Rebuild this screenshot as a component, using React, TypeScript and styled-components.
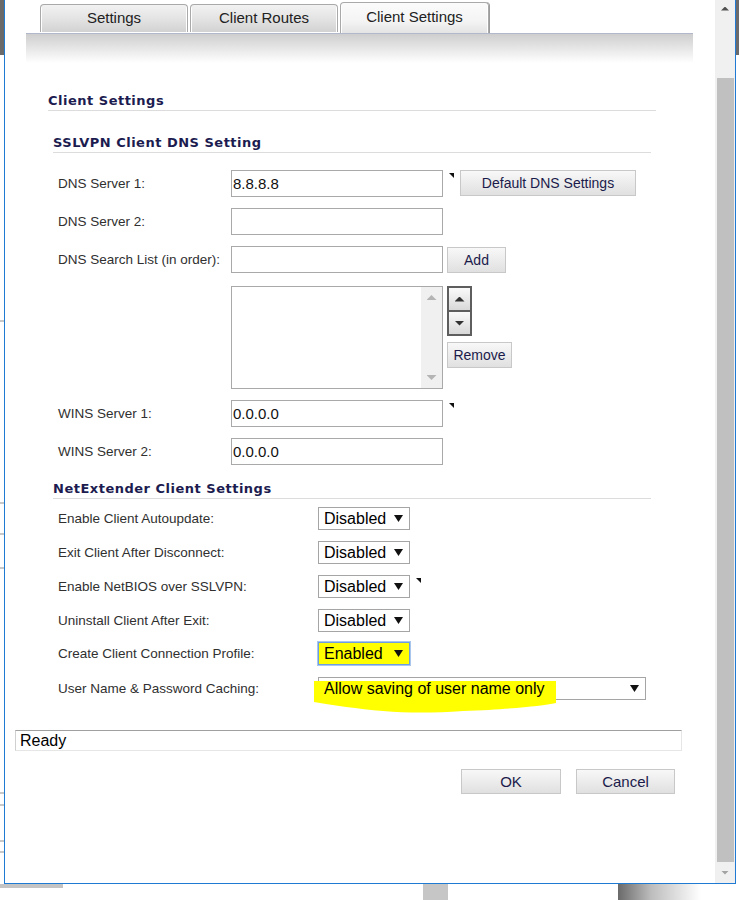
import React from "react";
import styled, { createGlobalStyle } from "styled-components";

const GlobalStyle = createGlobalStyle`
    html, body { margin: 0; padding: 0; background: #fff; }
    body { font-family: "Liberation Sans", Arial, sans-serif; }
    * { box-sizing: border-box; }
`;

const Screen = styled.div`
    width: 739px;
    height: 900px;
    display: flex;
    flex-direction: column;
    overflow: hidden;
    background: #fff;
`;

const Middle = styled.div`
    display: flex;
    height: 884px;
`;

const LeftEdge = styled.div`
    width: 4px;
    background:
        linear-gradient(#6a6a6a, #6a6a6a) 0 0 / 4px 55px no-repeat,
        linear-gradient(#c8c8c8, #c8c8c8) 0 320px / 4px 2px no-repeat,
        linear-gradient(#c8c8c8, #c8c8c8) 0 502px / 4px 2px no-repeat,
        linear-gradient(#c8c8c8, #c8c8c8) 0 533px / 4px 2px no-repeat,
        linear-gradient(#c8c8c8, #c8c8c8) 0 567px / 4px 2px no-repeat,
        linear-gradient(#c8c8c8, #c8c8c8) 0 792px / 4px 2px no-repeat,
        linear-gradient(#c8c8c8, #c8c8c8) 0 804px / 4px 2px no-repeat,
        linear-gradient(#c8c8c8, #c8c8c8) 0 840px / 4px 2px no-repeat,
        linear-gradient(#c8c8c8, #c8c8c8) 0 851px / 4px 2px no-repeat,
        #fff;
`;

const RightEdge = styled.div`
    width: 3px;
    background: linear-gradient(#6a6a6a 0 55px, #fff 55px);
`;

const Dialog = styled.div`
    width: 732px;
    border: 1px solid #1e7ad2;
    border-top: none;
    display: flex;
    background: #fff;
`;

const Content = styled.div`
    width: 710px;
    display: flex;
    flex-direction: column;
`;

/* ---------- tabs ---------- */

const TabStrip = styled.div`
    display: flex;
    align-items: flex-end;
    gap: 2px;
    height: 33px;
    padding-left: 35px;
`;

const Tab = styled.div<{ $active?: boolean }>`
    width: ${p => (p.$active ? 149 : 148)}px;
    height: ${p => (p.$active ? 31 : 28)}px;
    margin-bottom: ${p => (p.$active ? 0 : 1)}px;
    padding-bottom: ${p => (p.$active ? 3 : 3)}px;
    border: 1px solid #a9a9a9;
    border-bottom: none;
    border-radius: 4px 4px 0 0;
    background: ${p =>
        p.$active
            ? "linear-gradient(#fbfbfb, #f4f4f4 60%, #e4e4e4)"
            : "linear-gradient(#f2f2f2, #e2e2e2 55%, #d2d2d2)"};
    box-shadow: inset 5px 0 0 -4px #fff, inset -5px 0 0 -4px #fff,
        ${p => (p.$active ? "1px 0 0 #9c9c9c" : "inset 6px 0 0 -5px #c4c4c4")};
    display: flex;
    align-items: center;
    justify-content: center;
    font-size: 15px;
    color: #222;
`;

const Band = styled.div`
    margin: 0 22px 0 21px;
    height: 30px;
    border-top: 1px solid #b3b7cc;
    background: linear-gradient(#cecece, #e9e9e9 55%, #fff);
`;

/* ---------- sections ---------- */

const PageTitle = styled.div`
    margin: 30px 0 0 43px;
    width: 608px;
    padding-bottom: 1px;
    border-bottom: 1px solid #dcdcdc;
    font-family: "DejaVu Sans", Verdana, sans-serif;
    font-weight: bold;
    font-size: 13px;
    letter-spacing: 0.5px;
    line-height: 16px;
    color: #1c1c50;
`;

const Section = styled.div<{ $top: number }>`
    margin: ${p => p.$top}px 0 0 48px;
    width: 598px;
`;

const SectionTitle = styled.div`
    padding-bottom: 1px;
    border-bottom: 1px solid #dcdcdc;
    font-family: "DejaVu Sans", Verdana, sans-serif;
    font-weight: bold;
    font-size: 13px;
    letter-spacing: 0.5px;
    line-height: 16px;
    color: #1c1c50;
`;

const Rows = styled.div<{ $top: number }>`
    display: flex;
    flex-direction: column;
    gap: 11px;
    margin-top: ${p => p.$top}px;
    padding-left: 5px;
`;

const Row = styled.div<{ $top?: number }>`
    display: flex;
    align-items: flex-start;
    margin-top: ${p => p.$top ?? 0}px;
`;

const Label = styled.div<{ $width: number; $height: number }>`
    width: ${p => p.$width}px;
    line-height: ${p => p.$height}px;
    font-size: 13.5px;
    color: #303030;
    white-space: nowrap;
`;

const TextBox = styled.div`
    width: 212px;
    height: 27px;
    border: 1px solid #a9a9a9;
    padding-left: 1px;
    font-size: 15px;
    line-height: 25px;
    color: #111;
`;

const Marker = styled.div`
    width: 5px;
    height: 5px;
    margin: 3px 0 0 6px;
    background: #111;
    clip-path: polygon(0 0, 100% 0, 100% 100%);
`;

const Button = styled.div<{ $width: number; $left?: number; $top?: number }>`
    width: ${p => p.$width}px;
    height: 26px;
    margin-left: ${p => p.$left ?? 0}px;
    margin-top: ${p => p.$top ?? 0}px;
    border: 1px solid #c8c8c8;
    background: linear-gradient(#f8f8f8, #ececec 50%, #e0e0e0);
    display: flex;
    align-items: center;
    justify-content: center;
    font-size: 14px;
    color: #1b1b4b;
`;

const ListBox = styled.div`
    width: 212px;
    height: 103px;
    border: 1px solid #a9a9a9;
    display: flex;
    justify-content: flex-end;
`;

const ListScroll = styled.div`
    width: 21px;
    background: #f0f0f0;
    display: flex;
    flex-direction: column;
    justify-content: space-between;
    align-items: center;
    padding: 8px 0 8px;
`;

const Arrow = styled.div<{ $down?: boolean; $size: number; $color: string }>`
    width: ${p => p.$size * 2}px;
    height: ${p => p.$size}px;
    background: ${p => p.$color};
    clip-path: ${p =>
        p.$down ? "polygon(0 0, 100% 0, 50% 100%)" : "polygon(50% 0, 100% 100%, 0 100%)"};
`;

const SideColumn = styled.div`
    display: flex;
    flex-direction: column;
    align-items: flex-start;
    margin-left: 4px;
`;

const MoveGroup = styled.div`
    width: 25px;
    border: 2px solid #5e5e5e;
    display: flex;
    flex-direction: column;
    background: #5e5e5e;
    gap: 2px;
`;

const MoveButton = styled.div`
    height: 22px;
    background: linear-gradient(#fafafa, #e6e6e6 60%, #d8d8d8);
    display: flex;
    align-items: center;
    justify-content: center;
`;

const Select = styled.div<{ $width: number; $highlight?: boolean }>`
    position: relative;
    width: ${p => p.$width}px;
    height: 23px;
    border: 1px solid ${p => (p.$highlight ? "#6f9ee0" : "#a5a5a5")};
    background: ${p => (p.$highlight ? "#ffff00" : "#fff")};
    box-shadow: ${p => (p.$highlight ? "0 0 0 1px #a9c6ee" : "none")};
    display: flex;
    align-items: center;
    justify-content: space-between;
    padding: 0 6px 0 5px;
    font-size: 16px;
    color: #000;
`;

const SelectText = styled.span`
    position: relative;
    z-index: 1;
    line-height: 21px;
`;

const Caret = styled.span`
    position: relative;
    z-index: 1;
    width: 9px;
    height: 7px;
    background: #111;
    clip-path: polygon(0 0, 100% 0, 50% 100%);
`;

const Highlight = styled.svg`
    position: absolute;
    left: -6px;
    top: 2px;
    overflow: visible;
`;

/* ---------- footer ---------- */

const StatusBar = styled.div`
    margin: 30px 0 0 10px;
    width: 667px;
    height: 21px;
    border-top: 1px solid #a0a0a0;
    border-left: 1px solid #d0d0d0;
    border-right: 1px solid #e6e6e6;
    border-bottom: 1px solid #e6e6e6;
    padding-left: 4px;
    font-size: 16px;
    line-height: 19px;
    color: #000;
`;

const Actions = styled.div`
    display: flex;
    justify-content: flex-end;
    gap: 15px;
    margin-top: 18px;
    padding-right: 40px;
`;

const ActionButton = styled(Button)`
    height: 25px;
    font-size: 15px;
`;

/* ---------- page scrollbar ---------- */

const Scrollbar = styled.div`
    width: 20px;
    background: #f0f0f0;
    display: flex;
    flex-direction: column;
    align-items: center;
`;

const ScrollArrow = styled.div<{ $h: number }>`
    height: ${p => p.$h}px;
    display: flex;
    align-items: center;
    justify-content: center;
`;

const Thumb = styled.div`
    width: 17px;
    margin-top: 61px;
    height: 784px;
    background: #c0c0c0;
`;

/* ---------- desktop behind ---------- */

const BottomStrip = styled.div`
    height: 16px;
    display: flex;
    background: #fff;
`;

const Shade = styled.div<{ $width: number; $left: number; $bg: string; $h?: number }>`
    width: ${p => p.$width}px;
    margin-left: ${p => p.$left}px;
    height: ${p => p.$h ?? 16}px;
    background: ${p => p.$bg};
`;

const dnsRows = [
    { label: "DNS Server 1:", value: "8.8.8.8" },
    { label: "DNS Server 2:", value: "" },
];

const clientRows = [
    { label: "Enable Client Autoupdate:", value: "Disabled" },
    { label: "Exit Client After Disconnect:", value: "Disabled" },
    { label: "Enable NetBIOS over SSLVPN:", value: "Disabled", marker: true },
    { label: "Uninstall Client After Exit:", value: "Disabled" },
];

export default function App() {
    return (
        <Screen>
            <GlobalStyle />
            <Middle>
                <LeftEdge />
                <Dialog>
                    <Content>
                        <TabStrip>
                            <Tab>Settings</Tab>
                            <Tab>Client Routes</Tab>
                            <Tab $active>Client Settings</Tab>
                        </TabStrip>
                        <Band />

                        <PageTitle>Client Settings</PageTitle>

                        <Section $top={24}>
                            <SectionTitle>SSLVPN Client DNS Setting</SectionTitle>
                            <Rows $top={17}>
                                {dnsRows.map((row, i) => (
                                    <Row key={row.label}>
                                        <Label $width={173} $height={27}>{row.label}</Label>
                                        <TextBox>{row.value}</TextBox>
                                        {i === 0 && (
                                            <>
                                                <Marker />
                                                <Button $width={176} $left={6}>Default DNS Settings</Button>
                                            </>
                                        )}
                                    </Row>
                                ))}
                                <Row>
                                    <Label $width={173} $height={27}>DNS Search List (in order):</Label>
                                    <TextBox />
                                    <Button $width={59} $left={4} $top={1}>Add</Button>
                                </Row>
                                <Row $top={2}>
                                    <Label $width={173} $height={27} />
                                    <ListBox>
                                        <ListScroll>
                                            <Arrow $size={5} $color="#b4b4b4" />
                                            <Arrow $size={5} $color="#b4b4b4" $down />
                                        </ListScroll>
                                    </ListBox>
                                    <SideColumn>
                                        <MoveGroup>
                                            <MoveButton><Arrow $size={5} $color="#333" /></MoveButton>
                                            <MoveButton><Arrow $size={5} $color="#333" $down /></MoveButton>
                                        </MoveGroup>
                                        <Button $width={65} $top={6}>Remove</Button>
                                    </SideColumn>
                                </Row>
                                <Row>
                                    <Label $width={173} $height={27}>WINS Server 1:</Label>
                                    <TextBox>0.0.0.0</TextBox>
                                    <Marker />
                                </Row>
                                <Row>
                                    <Label $width={173} $height={27}>WINS Server 2:</Label>
                                    <TextBox>0.0.0.0</TextBox>
                                </Row>
                            </Rows>
                        </Section>

                        <Section $top={16}>
                            <SectionTitle>NetExtender Client Settings</SectionTitle>
                            <Rows $top={8}>
                                {clientRows.map(row => (
                                    <Row key={row.label}>
                                        <Label $width={260} $height={23}>{row.label}</Label>
                                        <Select $width={92}>
                                            <SelectText>{row.value}</SelectText>
                                            <Caret />
                                        </Select>
                                        {row.marker && <Marker />}
                                    </Row>
                                ))}
                                <Row $top={-1}>
                                    <Label $width={260} $height={23}>Create Client Connection Profile:</Label>
                                    <Select $width={92} $highlight>
                                        <SelectText>Enabled</SelectText>
                                        <Caret />
                                    </Select>
                                </Row>
                                <Row $top={1}>
                                    <Label $width={260} $height={23}>User Name &amp; Password Caching:</Label>
                                    <Select $width={328}>
                                        <Highlight width="244" height="34" viewBox="0 0 244 34">
                                            <path
                                                d="M1,1 L243,1 L243,23 C228,26 200,29 150,31 C120,33 95,33 70,31 C45,29 20,25 1,22 Z"
                                                fill="#ffff00"
                                            />
                                        </Highlight>
                                        <SelectText>Allow saving of user name only</SelectText>
                                        <Caret />
                                    </Select>
                                </Row>
                            </Rows>
                        </Section>

                        <StatusBar>Ready</StatusBar>

                        <Actions>
                            <ActionButton $width={100}>OK</ActionButton>
                            <ActionButton $width={99}>Cancel</ActionButton>
                        </Actions>
                    </Content>

                    <Scrollbar>
                        <ScrollArrow $h={17}><Arrow $size={4} $color="#505050" /></ScrollArrow>
                        <Thumb />
                        <ScrollArrow $h={21}><Arrow $size={4} $color="#a3a3a3" $down /></ScrollArrow>
                    </Scrollbar>
                </Dialog>
                <RightEdge />
            </Middle>
            <BottomStrip>
                <Shade $width={63} $left={0} $bg="#c4c4c4" $h={4} />
                <Shade $width={25} $left={360} $bg="#c6c6c6" />
                <Shade $width={83} $left={170} $bg="linear-gradient(90deg, #6a6a6a, #bdbdbd 40%, #fff)" />
            </BottomStrip>
        </Screen>
    );
}
